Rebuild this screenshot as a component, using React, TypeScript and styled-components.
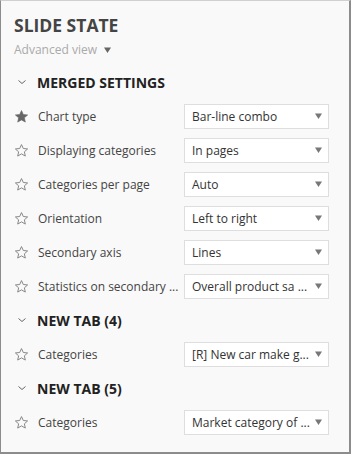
import React from 'react';
import styled, { createGlobalStyle } from 'styled-components';

const GlobalStyle = createGlobalStyle`
  html, body {
    margin: 0;
    padding: 0;
    background: #ffffff;
  }
  body {
    font-family: "Open Sans", "Noto Sans", "Liberation Sans", sans-serif;
  }
`;

const Panel = styled.div`
  box-sizing: border-box;
  width: 351px;
  height: 454px;
  background: #f9f9f9;
  border-top: 1px solid #d0d0d0;
  border-left: 1px solid #8c8c8c;
  border-right: 2px solid #8c8c8c;
  border-bottom: 2px solid #8c8c8c;
  padding: 0 20px 0 13px;
  overflow: hidden;
`;

const Title = styled.h1`
  margin: 0;
  padding-top: 12px;
  font-size: 17.5px;
  line-height: 24px;
  font-weight: 700;
  color: #444;
`;

const ViewPicker = styled.div`
  display: flex;
  align-items: center;
  gap: 7px;
  height: 25px;
  font-size: 12px;
  color: #aaa;
`;

const Triangle = ({ color }: { color: string }) => (
  <svg width="7" height="6" viewBox="0 0 7 6">
    <path d="M0 0.5H7L3.5 6z" fill={color} />
  </svg>
);

const List = styled.div`
  margin-top: 3px;
  display: flex;
  flex-direction: column;
`;

const SectionHeader = styled.div`
  display: flex;
  align-items: center;
  height: 34px;
  gap: 11px;
  padding-left: 4px;
`;

const SectionTitle = styled.span`
  font-size: 14px;
  font-weight: 700;
  color: #222;
`;

const Row = styled.div`
  display: flex;
  align-items: center;
  height: 34px;
`;

const StarBox = styled.span`
  display: flex;
  width: 24px;
  flex-shrink: 0;
`;

const Label = styled.span`
  width: 146px;
  flex-shrink: 0;
  font-size: 12px;
  color: #444;
  white-space: nowrap;
  overflow: hidden;
`;

const Select = styled.div`
  box-sizing: border-box;
  width: 146px;
  height: 25px;
  display: flex;
  align-items: center;
  justify-content: space-between;
  padding: 0 6px 0 7px;
  background: #fff;
  border: 1px solid #dedede;
  font-size: 12px;
  color: #333;
  white-space: nowrap;
`;

const Star = ({ filled }: { filled?: boolean }) => (
  <svg width="15" height="15" viewBox="0 0 24 24">
    <path
      d="M12 2.5l2.9 6.3 6.9.7-5.2 4.6 1.5 6.8L12 17.4l-6.1 3.5 1.5-6.8-5.2-4.6 6.9-.7z"
      fill={filled ? '#666' : 'none'}
      stroke={filled ? '#666' : '#888'}
      strokeWidth={filled ? 1 : 1.6}
      strokeLinejoin="round"
    />
  </svg>
);

const Chevron = () => (
  <svg width="8" height="6" viewBox="0 0 8 6">
    <path d="M0.5 1.5L4 4.5L7.5 1.5" fill="none" stroke="#666" strokeWidth="1" />
  </svg>
);

interface Setting {
  label: string;
  value: string;
  starred?: boolean;
}

interface Section {
  title: string;
  settings: Setting[];
}

const sections: Section[] = [
  {
    title: 'MERGED SETTINGS',
    settings: [
      { label: 'Chart type', value: 'Bar-line combo', starred: true },
      { label: 'Displaying categories', value: 'In pages' },
      { label: 'Categories per page', value: 'Auto' },
      { label: 'Orientation', value: 'Left to right' },
      { label: 'Secondary axis', value: 'Lines' },
      { label: 'Statistics on secondary ...', value: 'Overall product sa ...' },
    ],
  },
  {
    title: 'NEW TAB (4)',
    settings: [{ label: 'Categories', value: '[R] New car make g...' }],
  },
  {
    title: 'NEW TAB (5)',
    settings: [{ label: 'Categories', value: 'Market category of ...' }],
  },
];

const App: React.FC = () => {
  return (
    <>
      <GlobalStyle />
      <Panel>
        <Title>SLIDE STATE</Title>
        <ViewPicker>
          Advanced view <Triangle color="#666" />
        </ViewPicker>
        <List>
          {sections.map(section => (
            <React.Fragment key={section.title}>
              <SectionHeader>
                <Chevron />
                <SectionTitle>{section.title}</SectionTitle>
              </SectionHeader>
              {section.settings.map((s, i) => (
                <Row key={section.title + i}>
                  <StarBox>
                    <Star filled={s.starred} />
                  </StarBox>
                  <Label>{s.label}</Label>
                  <Select>
                    <span>{s.value}</span>
                    <Triangle color="#777" />
                  </Select>
                </Row>
              ))}
            </React.Fragment>
          ))}
        </List>
      </Panel>
    </>
  );
};

export default App;
